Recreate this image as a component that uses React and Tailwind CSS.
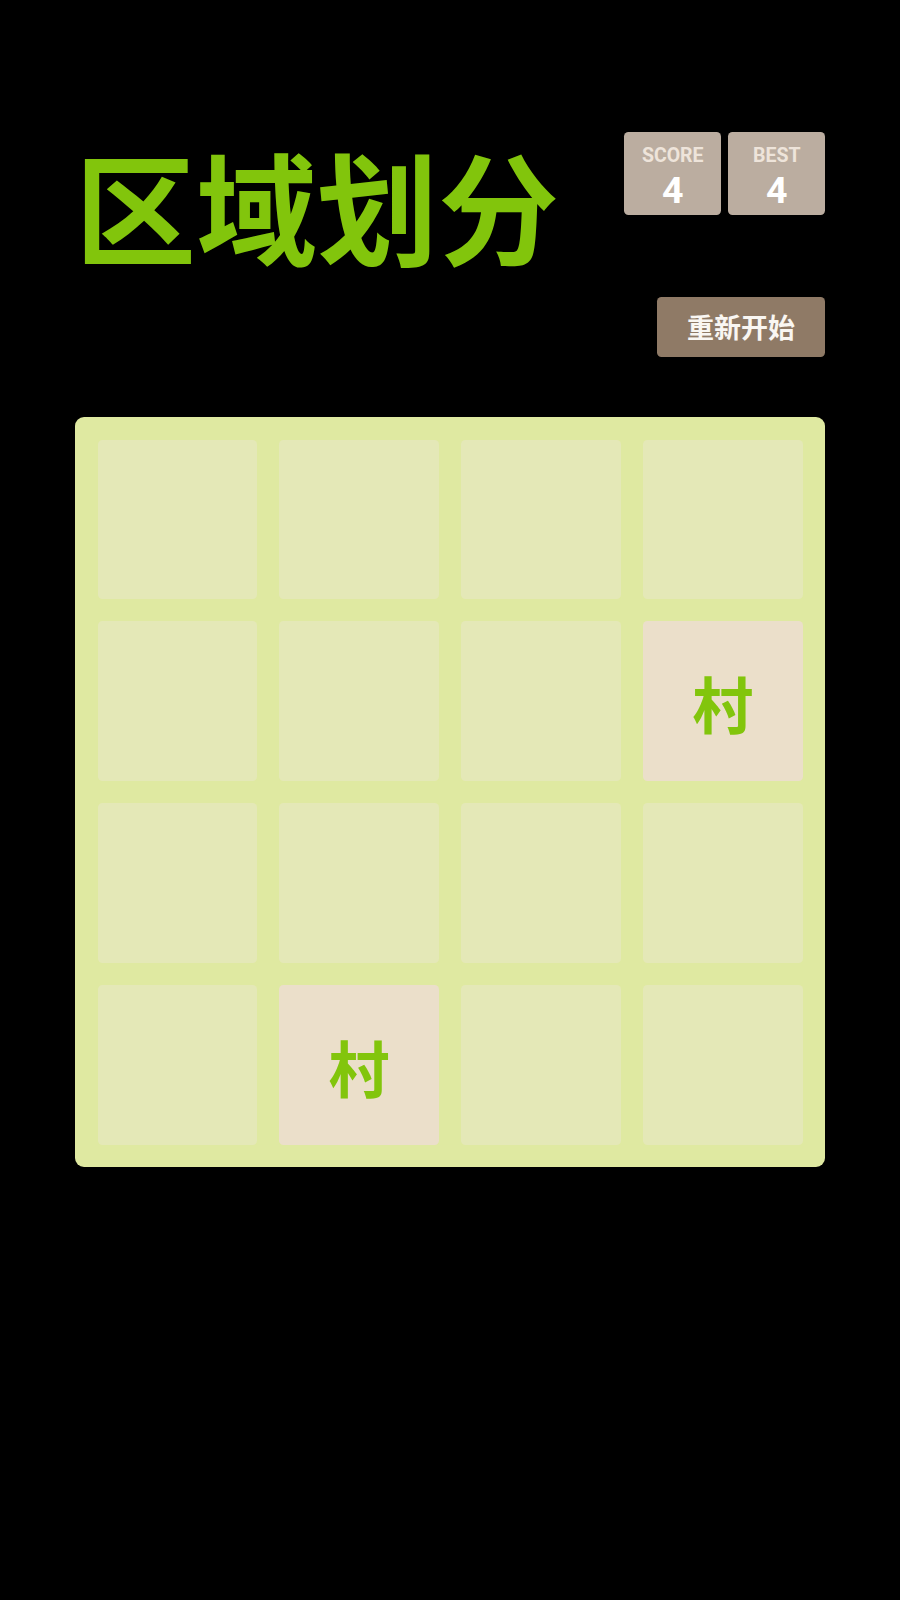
const CJK = { fontFamily: '"Noto Sans CJK SC", "Noto Sans", sans-serif' };

const tiles = { 7: '村', 13: '村' };

function ScoreBox({ label, value }) {
  return (
    <div className="relative h-[82.5px] px-[37.5px] pt-[22.5px] rounded-[4.5px] bg-[#bbada0] font-bold text-center">
      <div className="absolute inset-x-0 top-[14px] text-[19.5px] leading-[19.5px] uppercase text-[#eee4da]">{label}</div>
      <div className="text-[37.5px] leading-[70.5px] h-[37.5px] text-white">{value}</div>
    </div>
  );
}

export default function App() {
  return (
    <div className="min-h-screen bg-black" style={{ fontFamily: 'Roboto, "Noto Sans CJK SC", sans-serif' }}>
      <div className="w-[750px] mx-auto pt-[132px]">
        {/* Heading + scores */}
        <div className="flex justify-between items-start">
          <h1 className="mt-[4px] text-[121px] leading-[135px] font-bold text-[#82c50c]" style={CJK}>
            区域划分
          </h1>
          <div className="flex gap-[7.5px]">
            <ScoreBox label="Score" value="4" />
            <ScoreBox label="Best" value="4" />
          </div>
        </div>

        {/* Restart */}
        <div className="flex justify-end mt-[26px]">
          <button
            className="h-[60px] px-[30px] rounded-[4.5px] bg-[#8f7a66] text-[#f9f6f2] text-[27px] leading-[60px] font-bold"
            style={CJK}
          >
            重新开始
          </button>
        </div>

        {/* Board */}
        <div className="mt-[60px] grid grid-cols-4 gap-[22.5px] p-[22.5px] rounded-[9px] bg-[#dfe9a1]">
          {Array.from({ length: 16 }).map((_, i) => (
            <div
              key={i}
              className={
                'aspect-square rounded-[4.5px] flex items-center justify-center ' +
                (tiles[i] ? 'bg-[#ebdfca]' : 'bg-[#e4e8b7]')
              }
            >
              {tiles[i] && (
                <span className="pt-[3px] text-[61px] font-bold text-[#82c50c]" style={CJK}>
                  {tiles[i]}
                </span>
              )}
            </div>
          ))}
        </div>
      </div>
    </div>
  );
}
